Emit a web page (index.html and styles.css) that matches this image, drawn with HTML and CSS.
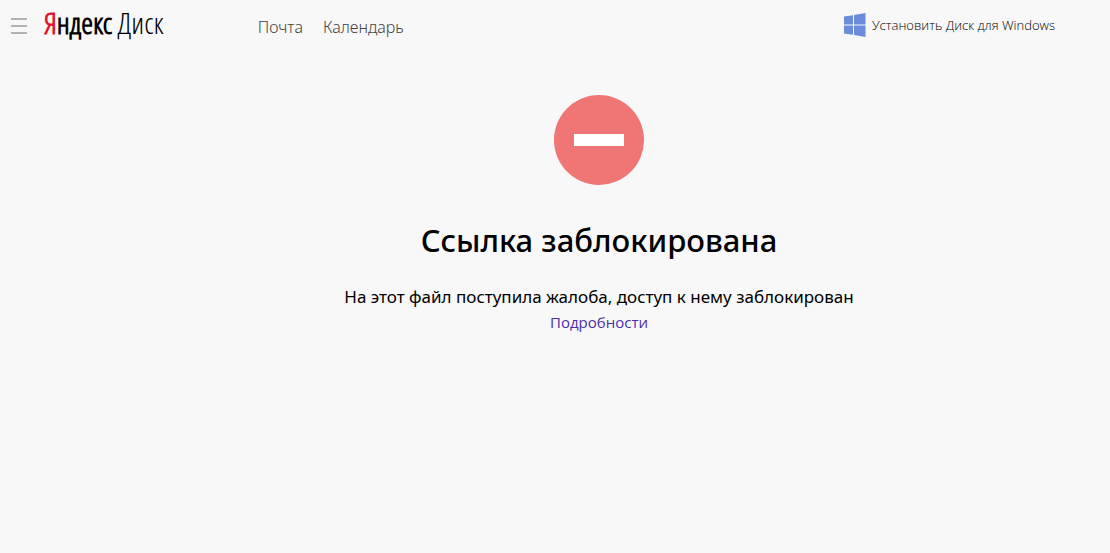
FILE: index.html
```html
<!DOCTYPE html>
<html lang="ru">
<head>
    <meta charset="UTF-8">
    <meta name="viewport" content="width=device-width, initial-scale=1.0">
    <title>Яндекс Диск</title>
    <link rel="stylesheet" href="styles.css">
</head>
<body>
    <header class="header">
        <button class="menu-button" type="button" aria-label="Меню">
            <span></span>
            <span></span>
            <span></span>
        </button>
        <a class="logo" href="#"><span class="logo-yandex"><span class="logo-ya">Я</span>ндекс</span> Диск</a>
        <nav class="nav">
            <a href="#mail">Почта</a>
            <a href="#calendar">Календарь</a>
        </nav>
        <a class="install" href="#install">
            <svg width="22" height="24" viewBox="0 0 22 24" aria-hidden="true">
                <path fill="#6b8cdb" d="M0 3.6 9 2.2V11.5H0ZM10 2 21.5 0V11.5H10ZM0 12.5H9V21.8L0 20.4ZM10 12.5H21.5V24L10 22Z"/>
            </svg>
            <span>Установить Диск для Windows</span>
        </a>
    </header>
    <main class="content">
        <svg class="blocked-icon" width="90" height="90" viewBox="0 0 90 90" aria-hidden="true">
            <circle cx="45" cy="45" r="45" fill="#f07575"/>
            <rect x="20" y="39" width="50" height="12" fill="#fff"/>
        </svg>
        <h1>Ссылка заблокирована</h1>
        <p>На этот файл поступила жалоба, доступ к нему заблокирован</p>
        <a class="details" href="#details">Подробности</a>
    </main>
</body>
</html>
```

FILE: styles.css
```css
body {
    margin: 0;
    background-color: #f8f8f8;
    color: #000;
    font-family: "Noto Sans", "Open Sans", sans-serif;
}

a {
    text-decoration: none;
}

.header {
    display: flex;
    align-items: center;
    height: 52px;
    padding: 0 55px 0 11px;
}

.menu-button {
    display: flex;
    flex-direction: column;
    gap: 5px;
    width: 16px;
    padding: 0;
    border: none;
    background: none;
    cursor: pointer;
}

.menu-button span {
    height: 2px;
    background-color: #b2b2b2;
}

.logo {
    margin-left: 17px;
    padding-bottom: 6px;
    color: #000;
    font-family: "Open Sans Condensed Light", "Open Sans Condensed", sans-serif;
    font-size: 30px;
    line-height: 32px;
    white-space: nowrap;
}

.logo-yandex {
    font-weight: 700;
}

.logo-ya {
    color: #e3122d;
}

.nav {
    display: flex;
    gap: 20px;
    margin-left: 94px;
    padding-top: 2px;
    font-size: 16px;
    line-height: 24px;
}

.nav a {
    color: #444;
    font-weight: 300;
}

.install {
    display: flex;
    align-items: center;
    gap: 6px;
    margin-left: auto;
    padding-bottom: 2px;
    color: #000;
    font-family: "Open Sans", sans-serif;
    font-size: 13px;
    font-weight: 300;
    line-height: 20px;
    white-space: nowrap;
}

.content {
    display: flex;
    flex-direction: column;
    align-items: center;
    padding: 43px 0 24px 88px;
    text-align: center;
}

h1 {
    margin: 31px 0 0;
    font-size: 31px;
    line-height: 48px;
    font-weight: 500;
}

p {
    margin: 21px 0 0;
    font-size: 17px;
    line-height: 24px;
}

.details {
    color: #4b2fa8;
    font-family: "Open Sans", sans-serif;
    font-size: 15px;
    line-height: 26px;
}
```
